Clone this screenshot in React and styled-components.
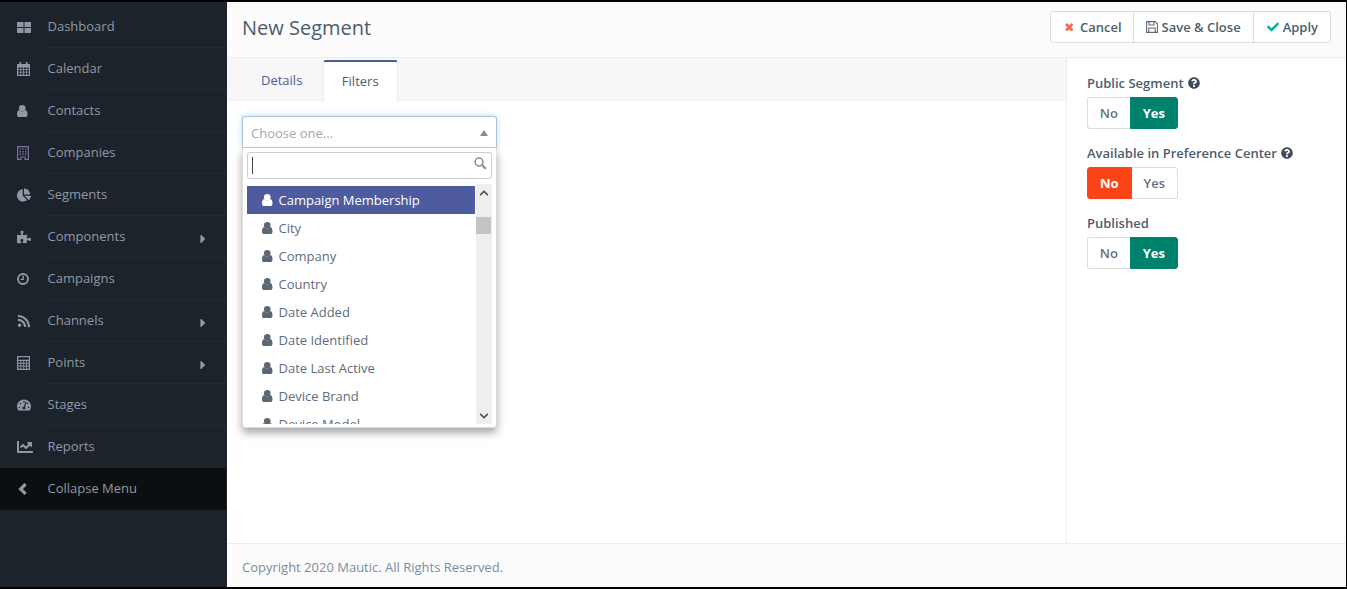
import React from "react";
import styled, { createGlobalStyle } from "styled-components";
import {
  FaChartPie, FaPuzzlePiece, FaRss, FaTachometerAlt, FaChartLine,
  FaChevronUp, FaChevronDown, FaCaretRight, FaQuestionCircle, FaCheck,
} from "react-icons/fa";

const Global = createGlobalStyle`
  html, body { margin: 0; padding: 0; height: 100%; background: #000; }
  body { font-family: "Open Sans", "Liberation Sans", sans-serif; font-size: 13px; color: #4e5d6c; }
  * { box-sizing: border-box; }
`;

const Svg = ({ w, h, children }) => (
  <svg width={w} height={h} viewBox={`0 0 ${w} ${h}`} fill="currentColor" style={{ display: "block" }}>{children}</svg>
);
const IconGrid = () => (
  <Svg w={14} h={11}>
    <rect width="6.5" height="5" /><rect x="7.5" width="6.5" height="5" />
    <rect y="6" width="6.5" height="5" /><rect x="7.5" y="6" width="6.5" height="5" />
  </Svg>
);
const IconCalendar = () => (
  <Svg w={13} h={14}>
    <path fillRule="evenodd" d="M0 2h13v12H0zM1.2 5.5v1.7h2.2V5.5zm3 0v1.7h2V5.5zm2.9 0v1.7h2V5.5zm2.8 0v1.7h2V5.5zM1.2 8v1.7h2.2V8zm3 0v1.7h2V8zm2.9 0v1.7h2V8zm2.8 0v1.7h2V8zM1.2 10.5v2.2h2.2v-2.2zm3 0v2.2h2v-2.2zm2.9 0v2.2h2v-2.2zm2.8 0v2.2h2v-2.2z" />
    <rect x="2.5" width="1.6" height="3.5" /><rect x="8.9" width="1.6" height="3.5" />
  </Svg>
);
const IconUser = () => (
  <svg width="10.5" height="12" viewBox="0 0 10.5 12" fill="currentColor" style={{ display: "block" }}>
    <ellipse cx="5.25" cy="3.2" rx="3.3" ry="3.2" />
    <path d="M2.2 5C3 5.9 4 6.4 5.25 6.4S7.5 5.9 8.3 5C9.8 5.4 10.5 6.8 10.5 9.4 10.5 11 9.6 12 8.3 12H2.2C.9 12 0 11 0 9.4 0 6.8.7 5.4 2.2 5z" />
  </svg>
);
const IconBuilding = () => (
  <Svg w={12} h={14}>
    <path fillRule="evenodd" d="M0 0h12v14H7.5v-2.5h-3V14H0zM1.2 1.2v11.6h2.2v-2.3h5.2v2.3h2.2V1.2zM2.6 2.4h1.4v1.4H2.6zm2.7 0h1.4v1.4H5.3zm2.7 0h1.4v1.4H8zM2.6 5h1.4v1.4H2.6zm2.7 0h1.4v1.4H5.3zM8 5h1.4v1.4H8zM2.6 7.6h1.4V9H2.6zm2.7 0h1.4V9H5.3zm2.7 0h1.4V9H8z" />
  </Svg>
);
const IconClock = () => (
  <svg width="12" height="12" viewBox="0 0 12 12" fill="none" stroke="currentColor" style={{ display: "block" }}>
    <circle cx="6" cy="6" r="5" strokeWidth="1.9" /><path d="M6.2 2.8V6.4H3.6" strokeWidth="1.4" />
  </svg>
);
const IconCalc = () => (
  <Svg w={13} h={14}>
    <path fillRule="evenodd" d="M0 0h13v14H0zM1.2 1.2v2.6h10.6V1.2zM1.2 5v1.7h2.2V5zm3.1 0v1.7h2V5zm2.9 0v1.7h2V5zm2.9 0v1.7h1.7V5zM1.2 7.7v1.7h2.2V7.7zm3.1 0v1.7h2V7.7zm2.9 0v1.7h2V7.7zm2.9 0v1.7h1.7V7.7zM1.2 10.4v2.4h2.2v-2.4zm3.1 0v2.4h2v-2.4zm2.9 0v2.4h2v-2.4zm2.9 0v2.4h1.7v-2.4z" />
  </Svg>
);
const IconBack = () => (
  <svg width="10" height="12" viewBox="0 0 10 12" fill="none" stroke="currentColor" strokeWidth="3.2" style={{ display: "block" }}>
    <path d="M8.6 1L3.6 6l5 5" />
  </svg>
);
const IconX = () => (
  <svg width="8.5" height="8.5" viewBox="0 0 8 8" fill="none" stroke="currentColor" strokeWidth="2.7" style={{ display: "block", marginRight: "2px" }}>
    <path d="M1 1l6 6M7 1L1 7" />
  </svg>
);
const IconSave = () => (
  <svg width="12" height="12" viewBox="0 0 12 12" fill="none" stroke="currentColor" strokeWidth="1.1" style={{ display: "block" }}>
    <path d="M.6.6h8.6l2.2 2.2v8.6H.6z" /><path d="M3 .8v3.2h5V.8M2.8 11.2V7h6.4v4.2" />
  </svg>
);
const IconSearch = () => (
  <svg width="13" height="13" viewBox="0 0 13 13" fill="none" stroke="currentColor" style={{ display: "block" }}>
    <circle cx="5" cy="5" r="3.9" strokeWidth="1.5" /><path d="M8 8l3.8 3.8" strokeWidth="2.2" />
  </svg>
);

const Page = styled.div`
  width: 1347px; height: 589px; overflow: hidden; background: #000;
  padding: 2px 1px 2px 0; display: flex;
`;
const Sidebar = styled.nav`
  width: 227px; flex: none; background: #1d232b; display: flex; flex-direction: column; padding-top: 4px;
`;
const Item = styled.div`
  height: 42px; display: flex; align-items: center; position: relative;
  color: #8f99a4; background: ${p => p.$dark ? "#0b0f12" : "transparent"};
  margin-right: ${p => p.$dark ? "1px" : "0"};
  &::after {
    content: ""; display: ${p => p.$line ? "block" : "none"};
    position: absolute; left: 47px; right: 0; bottom: 0; height: 1px; background: #232a33;
  }
`;
const ItemIcon = styled.span`
  width: 47.5px; flex: none; display: flex; padding-left: 17px; color: ${p => p.$tint || "#8f99a4"}; font-size: 14px;
  svg.wide { font-size: 16px; }
`;
const ItemLabel = styled.span` flex: 1; margin-top: -3px; `;
const Caret = styled.span`
  display: flex; margin-right: 17px; margin-top: 3px; color: #8f99a4; font-size: 14px;
`;
const Main = styled.main` flex: 1; display: flex; flex-direction: column; background: #fff; min-width: 0; `;
const Header = styled.header`
  height: 56px; flex: none; background: #fbfbfb; border-bottom: 1px solid #ebedf0;
  display: flex; align-items: center; justify-content: space-between; padding: 0 15px 4px 15px;
`;
const Title = styled.h1` margin: 0; font-size: 20px; font-weight: 400; color: #4e5d6c; `;
const BtnGroup = styled.div`
  display: flex; height: 32px; background: #fff; border: 1px solid #ddd; border-radius: 3px; margin-top: -1px;
`;
const Btn = styled.button`
  all: unset; box-sizing: border-box; display: flex; align-items: center; gap: 4px;
  font-weight: 600; font-size: 13px; color: #4e5d6c; white-space: nowrap;
  padding-left: ${p => p.$pl || "12px"}; padding-right: ${p => p.$pr || "12px"};
  & + & { border-left: 1px solid #ddd; }
  svg { color: ${p => p.$icon}; font-size: 12px; }
`;
const Body = styled.div` flex: 1; display: flex; min-height: 0; `;
const Content = styled.section` flex: 1; display: flex; flex-direction: column; min-width: 0; `;
const TabBar = styled.div`
  height: 43px; flex: none; display: flex; align-items: flex-end; background: #f7f7f7; padding-left: 15px;
  border-bottom: 1px solid #f2f2f2;
`;
const Tab = styled.div`
  height: 41px; display: flex; align-items: center; position: relative; top: 1px; padding-bottom: 2px;
  padding-left: ${p => p.$active ? "17.5px" : "18px"}; padding-right: ${p => p.$active ? "18.5px" : "20px"};
  color: ${p => p.$active ? "#4e5d6c" : "#4e5b9e"};
  ${p => p.$active ? `background:#fff;border:1px solid #ebedf0;border-top:2px solid #4e5b9e;border-bottom:none;border-radius:3px 3px 0 0;` : `border:1px solid transparent;`}
`;
const TabPane = styled.div` flex: 1; padding: 15px; position: relative; `;
const Select = styled.div` width: 255px; position: relative; `;
const SelectHead = styled.div`
  height: 32px; background: #fff; border: 1px solid #a9c3df; border-bottom-color: #ccc; border-radius: 3px 3px 0 0;
  box-shadow: 0 0 6px rgba(102,175,233,.45); padding: 1px 8px 0;
  display: flex; align-items: center; justify-content: space-between;
  color: #a0a8b2;
`;
const Tri = styled.span`
  width: 0; height: 0; border-left: 4px solid transparent; border-right: 4px solid transparent;
  border-bottom: 6px solid #8a8a8a;
`;
const Drop = styled.div`
  position: absolute; left: 0; top: 32px; width: 255px; height: 280px; background: #fff;
  border: 1px solid #ddd; border-top: none; border-radius: 0 0 4px 4px;
  box-shadow: 0 5px 8px rgba(0,0,0,.35); padding: 4px;
`;
const Search = styled.div`
  height: 27px; border: 1px solid #ccc; border-radius: 3px; display: flex; align-items: center; justify-content: space-between;
  padding: 0 4px 0 4px; color: #8a8a8a; font-size: 12px; svg { margin-top: -4px; }
`;
const Cursor = styled.span` width: 1px; height: 17px; background: #3a4450; `;
const ListWrap = styled.div` margin-top: 5px; height: 241px; display: flex; overflow: hidden; `;
const List = styled.ul` list-style: none; margin: 0; padding: 2px 0 0; width: 228px; height: 240px; flex: none; overflow: hidden; `;
const Opt = styled.li`
  height: 28px; display: flex; align-items: center; gap: 6px; padding-left: 15px; flex: none;
  background: ${p => p.$on ? "#4e5b9e" : "transparent"}; color: ${p => p.$on ? "#fff" : "#5d6c7c"};
  svg { color: ${p => p.$on ? "#fff" : "#5d6673"}; margin-top: -1px; }
`;
const Scroll = styled.div`
  width: 16px; margin-left: 1px; background: #eee; position: relative; height: 240px;
  display: flex; flex-direction: column; justify-content: space-between; align-items: center; padding: 4px 0 3px;
  font-size: 10px; color: #505050;
`;
const Thumb = styled.div` position: absolute; left: 0; top: 33px; width: 15px; height: 17px; background: #c4c4c4; `;
const Aside = styled.aside`
  width: 280px; flex: none; border-left: 1px solid #ebedf0; padding: 15px 20px; display: flex; flex-direction: column;
`;
const Field = styled.div` margin-bottom: 14px; `;
const Label = styled.label`
  display: flex; align-items: center; gap: 4px; font-weight: 600; color: #4e5d6c; height: 20px; margin-bottom: 4px;
  svg { font-size: 12px; color: #3f4c5a; }
`;
const Toggle = styled.div` display: flex; width: 91px; height: 32px; `;
const Opt2 = styled.div`
  flex: ${p => p.$w} 0 0; display: flex; align-items: center; justify-content: center;
  font-weight: ${p => p.$bg ? 700 : 600}; color: ${p => p.$bg ? "#fff" : "#66707d"};
  background: ${p => p.$bg || "#fff"};
  border: 1px solid ${p => p.$bg || "#ddd"};
  border-radius: ${p => p.$left ? "3px 0 0 3px" : "0 3px 3px 0"};
  ${p => p.$bg ? "" : (p.$left ? "border-right:none;" : "border-left:none;")}
`;
const Footer = styled.footer`
  height: 44px; flex: none; background: #fbfbfb; border-top: 1px solid #ebedf0; display: flex; align-items: center; padding: 2px 15px 0;
  color: #7d8c9b;
`;

const nav = [
  [<IconGrid />, "Dashboard"], [<IconCalendar />, "Calendar"], [<IconUser />, "Contacts"], [<IconBuilding />, "Companies", 0, "#7d6ba3"],
  [<FaChartPie />, "Segments"], [<FaPuzzlePiece />, "Components", 1], [<IconClock />, "Campaigns"], [<FaRss />, "Channels", 1],
  [<IconCalc />, "Points", 1], [<FaTachometerAlt />, "Stages"], [<FaChartLine className="wide" />, "Reports"],
];
const opts = ["Campaign Membership", "City", "Company", "Country", "Date Added", "Date Identified", "Date Last Active", "Device Brand", "Device Model"];

function Switch({ no, yes }) {
  return (
    <Toggle>
      <Opt2 $left $w={no ? 44 : 43} $bg={no}>No</Opt2>
      <Opt2 $w={no ? 47 : 48} $bg={yes}>Yes</Opt2>
    </Toggle>
  );
}

export default function App() {
  return (
    <>
      <Global />
      <Page>
        <Sidebar>
          {nav.map(([icon, t, c, tint], i) => (
            <Item key={t} $line={i < 10}>
              <ItemIcon $tint={tint}>{icon}</ItemIcon>
              <ItemLabel>{t}</ItemLabel>
              {c ? <Caret><FaCaretRight /></Caret> : null}
            </Item>
          ))}
          <Item $dark>
            <ItemIcon><IconBack /></ItemIcon>
            <ItemLabel>Collapse Menu</ItemLabel>
          </Item>
        </Sidebar>
        <Main>
          <Header>
            <Title>New Segment</Title>
            <BtnGroup>
              <Btn $icon="#f86b4f" $pl="14px" $pr="11px"><IconX />Cancel</Btn>
              <Btn $icon="#5d6c7c"><IconSave />Save &amp; Close</Btn>
              <Btn $icon="#00b49c" $pl="13px"><FaCheck />Apply</Btn>
            </BtnGroup>
          </Header>
          <Body>
            <Content>
              <TabBar>
                <Tab>Details</Tab>
                <Tab $active>Filters</Tab>
              </TabBar>
              <TabPane>
                <Select>
                  <SelectHead>Choose one...<Tri /></SelectHead>
                  <Drop>
                    <Search><Cursor /><IconSearch /></Search>
                    <ListWrap>
                      <List>
                        {opts.map((o, i) => <Opt key={o} $on={i === 0}><IconUser />{o}</Opt>)}
                      </List>
                      <Scroll><FaChevronUp /><Thumb /><FaChevronDown /></Scroll>
                    </ListWrap>
                  </Drop>
                </Select>
              </TabPane>
            </Content>
            <Aside>
              <Field>
                <Label>Public Segment <FaQuestionCircle /></Label>
                <Switch yes="#00816c" />
              </Field>
              <Field>
                <Label>Available in Preference Center <FaQuestionCircle /></Label>
                <Switch no="#fc4416" />
              </Field>
              <Field>
                <Label>Published</Label>
                <Switch yes="#00816c" />
              </Field>
            </Aside>
          </Body>
          <Footer>Copyright 2020 Mautic. All Rights Reserved.</Footer>
        </Main>
      </Page>
    </>
  );
}
